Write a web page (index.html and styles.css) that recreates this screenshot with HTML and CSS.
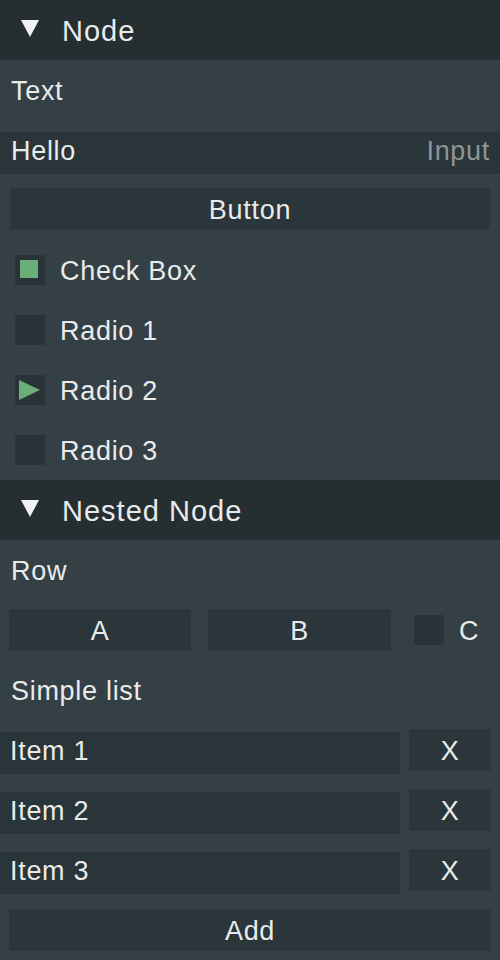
FILE: index.html
```html
<!DOCTYPE html>
<html>
<head>
<meta charset="utf-8">
<link rel="stylesheet" href="styles.css">
</head>
<body>
<div class="panel">
  <div class="header"><svg class="tri" width="18" height="18" viewBox="0 0 18 18"><polygon points="0,0 18,0 9,17" fill="#f2f2f2"/></svg><span class="htext">Node</span></div>
  <div class="row label"><span class="t">Text</span></div>
  <div class="row edit-row"><div class="edit full"><span>Hello</span><span class="ph">Input</span></div></div>
  <div class="row btn-row first"><div class="btn wide">Button</div></div>
  <div class="row opt"><span class="box"><span class="mark-sq"></span></span><span class="t">Check Box</span></div>
  <div class="row opt"><span class="box"></span><span class="t">Radio 1</span></div>
  <div class="row opt"><span class="box"><svg class="mark-tri" width="22" height="20" viewBox="0 0 22 20"><polygon points="0,0 21,10 0,20" fill="#6aae79"/></svg></span><span class="t">Radio 2</span></div>
  <div class="row opt"><span class="box"></span><span class="t">Radio 3</span></div>
  <div class="header"><svg class="tri" width="18" height="18" viewBox="0 0 18 18"><polygon points="0,0 18,0 9,17" fill="#f2f2f2"/></svg><span class="htext">Nested Node</span></div>
  <div class="row label"><span class="t">Row</span></div>
  <div class="row abc">
    <div class="btn">A</div>
    <div class="btn">B</div>
    <div class="cbox"><span class="box"></span><span class="t">C</span></div>
  </div>
  <div class="row label"><span class="t">Simple list</span></div>
  <div class="row item"><div class="edit field"><span>Item 1</span></div><div class="btn x">X</div></div>
  <div class="row item"><div class="edit field"><span>Item 2</span></div><div class="btn x">X</div></div>
  <div class="row item"><div class="edit field"><span>Item 3</span></div><div class="btn x">X</div></div>
  <div class="row btn-row"><div class="btn add">Add</div></div>
</div>
</body>
</html>
```
FILE: styles.css
```css
html, body {
  margin: 0;
  padding: 0;
  background: #344045;
}
body {
  font-family: "Liberation Sans", Arial, sans-serif;
  font-size: 27px;
  letter-spacing: 0.7px;
  color: #e9ebeb;
}
.panel {
  width: 500px;
  height: 960px;
  overflow: hidden;
  background: #344045;
}
.header {
  height: 60px;
  background: #252e31;
  display: flex;
  align-items: center;
  font-size: 29px;
  letter-spacing: 1px;
}
.htext {
  padding-top: 3px;
}
.t {
  padding-top: 2px;
}
.header .tri {
  margin-left: 21px;
  margin-right: 23px;
  margin-top: -3px;
}
.row {
  height: 60px;
  display: flex;
  box-sizing: border-box;
}
.label {
  align-items: center;
  padding-left: 11px;
}
.edit {
  height: 42px;
  line-height: 38px;
  background: #2a3539;
  display: flex;
  justify-content: space-between;
  padding: 0 10px 0 11px;
  box-sizing: border-box;
}
.edit-row {
  padding-top: 12px;
}
.edit.full {
  width: 500px;
}
.ph {
  color: #8e9598;
}
.btn {
  height: 42px;
  line-height: 42px;
  text-align: center;
  background: #2b363a;
  border: 1px solid #2e393d;
  box-sizing: border-box;
}
.btn-row {
  padding-top: 9px;
  padding-left: 9px;
}
.btn-row.first {
  padding-top: 8px;
  padding-left: 10px;
}
.btn.wide {
  width: 480px;
}
.btn.add {
  width: 482px;
}
.opt {
  align-items: center;
  padding-left: 15px;
}
.box {
  width: 30px;
  height: 30px;
  background: #2a3438;
  display: inline-flex;
  align-items: flex-start;
  justify-content: flex-start;
  flex: none;
  box-sizing: border-box;
}
.opt .box {
  margin-right: 15px;
}
.mark-sq {
  width: 18px;
  height: 18px;
  margin: 5px 0 0 5px;
  background: #6aae79;
}
.mark-tri {
  margin: 5px 0 0 4px;
}
.abc {
  padding: 9px 0 0 9px;
  column-gap: 17px;
}
.abc .btn {
  width: 182px;
}
.abc .btn + .btn {
  width: 183px;
}
.cbox {
  display: flex;
  align-items: center;
  height: 42px;
  margin-left: 6px;
}
.cbox .box {
  margin-right: 15px;
}
.item {
  column-gap: 9px;
  align-items: flex-start;
}
.item .field {
  width: 400px;
  margin-top: 12px;
  padding-left: 10px;
}
.item .x {
  width: 82px;
  margin-top: 9px;
}
```
